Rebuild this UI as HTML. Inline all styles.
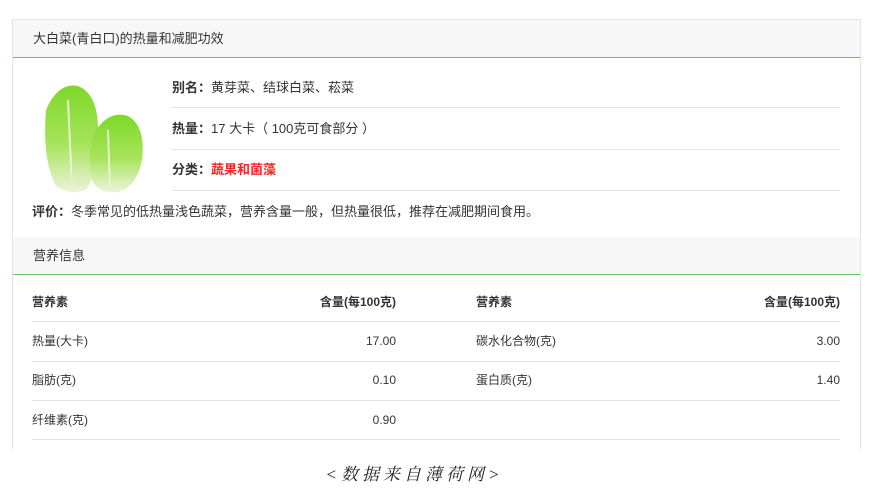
<!DOCTYPE html>
<html><head><meta charset="utf-8"><style>
*{margin:0;padding:0;box-sizing:border-box}
body{width:873px;height:494px;background:#fff;font-family:"Liberation Sans","Noto Sans CJK SC",sans-serif;color:#333;font-size:13px;position:relative;overflow:hidden}
.card{position:absolute;left:12px;top:19px;width:849px;height:430px;border:1px solid #e5e5e5;border-bottom:none}
.hd{position:absolute;left:0;width:847px;height:38px;background:#f7f7f7;border-bottom:1px solid #5fc96a;padding-left:20px;line-height:37px;font-size:13px;color:#333}
.abs{position:absolute;white-space:nowrap;line-height:16px}
.line{position:absolute;height:1px;background:#e3e3e3}
b{font-weight:bold}
.r{text-align:right}
.foot{position:absolute;left:-22px;width:873px;top:460px;text-align:center;font-family:"Liberation Serif","Noto Serif CJK SC",serif;font-style:italic;font-size:17px;letter-spacing:4px;color:#222}
</style></head><body>
<div class="card">
<div class="hd" style="top:0">大白菜(青白口)的热量和减肥功效</div>
<div class="hd" style="top:217px">营养信息</div>
</div>
<svg class="abs" style="left:38px;top:80px" width="112" height="116" viewBox="0 0 112 116">
<defs><linearGradient id="g" x1="0" y1="0" x2="0" y2="1"><stop offset="0" stop-color="#7ed82a"/><stop offset="0.55" stop-color="#a6e45a"/><stop offset="1" stop-color="#eef3dc"/></linearGradient></defs>
<path d="M8 30 Q20 2 40 6 Q60 14 60 50 Q62 90 48 110 Q30 116 18 106 Q4 80 8 30Z" fill="url(#g)"/>
<path d="M58 50 Q72 30 90 36 Q108 46 104 80 Q98 108 80 112 Q60 114 54 100 Q48 70 58 50Z" fill="url(#g)"/>
<path d="M30 20 L34 108 M70 50 L72 110" stroke="#e6f3d0" stroke-width="2" fill="none"/>
</svg>
<div class="abs" style="left:172px;top:80px"><b>别名：</b>黄芽菜、结球白菜、菘菜</div>
<div class="line" style="left:172px;top:107px;width:668px"></div>
<div class="abs" style="left:172px;top:121px"><b>热量：</b>17 大卡（ 100克可食部分 ）</div>
<div class="line" style="left:172px;top:149px;width:668px"></div>
<div class="abs" style="left:172px;top:162px"><b>分类：</b><b style="color:#f22">蔬果和菌藻</b></div>
<div class="line" style="left:172px;top:190px;width:668px"></div>
<div class="abs" style="left:32px;top:204px"><b>评价：</b>冬季常见的低热量浅色蔬菜，营养含量一般，但热量很低，推荐在减肥期间食用。</div>

<div style="font-size:12px">
<div class="abs" style="left:32px;top:294px;font-weight:bold">营养素</div>
<div class="abs r" style="left:296px;width:100px;top:294px;font-weight:bold">含量(每100克)</div>
<div class="abs" style="left:476px;top:294px;font-weight:bold">营养素</div>
<div class="abs r" style="left:740px;width:100px;top:294px;font-weight:bold">含量(每100克)</div>
<div class="line" style="left:32px;top:321px;width:808px"></div>
<div class="abs" style="left:32px;top:333px">热量(大卡)</div><div class="abs r" style="left:296px;width:100px;top:333px">17.00</div>
<div class="abs" style="left:476px;top:333px">碳水化合物(克)</div><div class="abs r" style="left:740px;width:100px;top:333px">3.00</div>
<div class="line" style="left:32px;top:361px;width:808px"></div>
<div class="abs" style="left:32px;top:372px">脂肪(克)</div><div class="abs r" style="left:296px;width:100px;top:372px">0.10</div>
<div class="abs" style="left:476px;top:372px">蛋白质(克)</div><div class="abs r" style="left:740px;width:100px;top:372px">1.40</div>
<div class="line" style="left:32px;top:400px;width:808px"></div>
<div class="abs" style="left:32px;top:412px">纤维素(克)</div><div class="abs r" style="left:296px;width:100px;top:412px">0.90</div>
<div class="line" style="left:32px;top:439px;width:808px"></div>
</div>
<div class="foot">&lt;数据来自薄荷网&gt;</div>
</body></html>
